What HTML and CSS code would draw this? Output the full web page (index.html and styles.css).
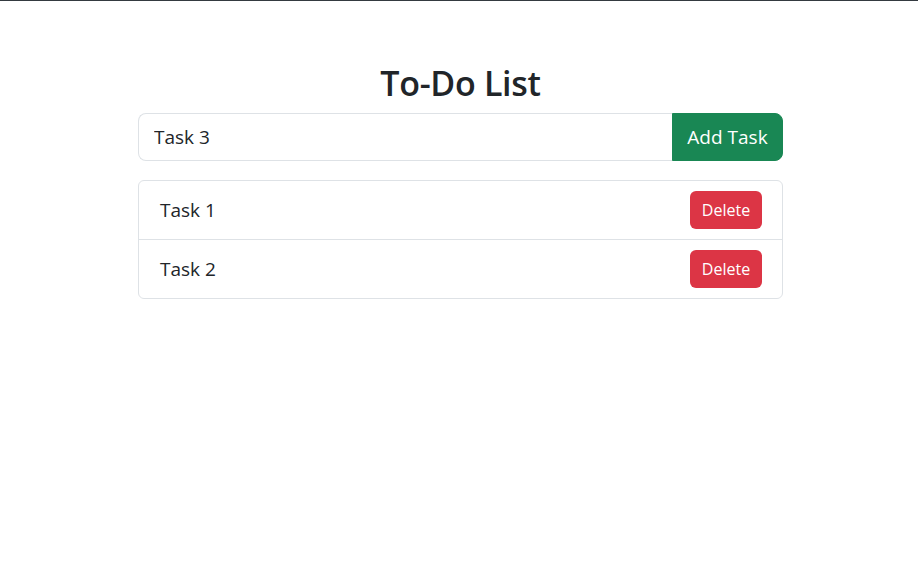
FILE: index.html
```html
<!DOCTYPE html>
<html lang="en">
<head>
<meta charset="utf-8">
<title>To-Do List</title>
<link rel="stylesheet" href="styles.css">
</head>
<body>
<div class="container">
  <h1 class="title">To-Do List</h1>
  <div class="input-group">
    <input class="task-input" type="text" value="Task 3">
    <button class="btn-add">Add Task</button>
  </div>
  <ul class="task-list">
    <li class="task-item"><span class="task-text">Task 1</span><button class="btn-delete">Delete</button></li>
    <li class="task-item"><span class="task-text">Task 2</span><button class="btn-delete">Delete</button></li>
  </ul>
</div>
</body>
</html>
```

FILE: styles.css
```css
* { box-sizing: border-box; }
html, body { margin: 0; padding: 0; }
body {
  font-family: "Open Sans", "Noto Sans", sans-serif;
  color: #212529;
  background: #fff;
  border-top: 1px solid #343a40;
}
.container {
  width: 645px;
  margin-left: calc(50% - 321px);
  padding-top: 61px;
}
.title {
  margin: 0 0 8px;
  font-size: 34px;
  font-weight: 600;
  line-height: 43px;
  text-align: center;
  letter-spacing: -0.3px;
}
.input-group {
  display: flex;
  height: 48px;
}
.task-input {
  flex: 1;
  min-width: 0;
  border: 1px solid #dee2e6;
  border-right: none;
  border-radius: 8px 0 0 8px;
  padding: 8px 15px;
  font-family: inherit;
  font-size: 19px;
  color: #212529;
  outline: none;
}
.btn-add {
  width: 111px;
  border: 1px solid #198754;
  background: #198754;
  color: #fff;
  font-family: inherit;
  font-size: 19px;
  border-radius: 0 8px 8px 0;
  padding: 0;
}
.task-list {
  list-style: none;
  margin: 19px 0 0;
  padding: 0;
  border: 1px solid #dee2e6;
  border-radius: 6px;
}
.task-item {
  display: flex;
  align-items: center;
  justify-content: space-between;
  padding: 10px 20px 10px 21px;
}
.task-item + .task-item { border-top: 1px solid #dee2e6; }
.task-text { font-size: 19px; }
.btn-delete {
  width: 72px;
  height: 38px;
  border: none;
  border-radius: 6px;
  background: #dc3545;
  color: #fff;
  font-family: inherit;
  font-size: 16px;
  padding: 0;
}
```
